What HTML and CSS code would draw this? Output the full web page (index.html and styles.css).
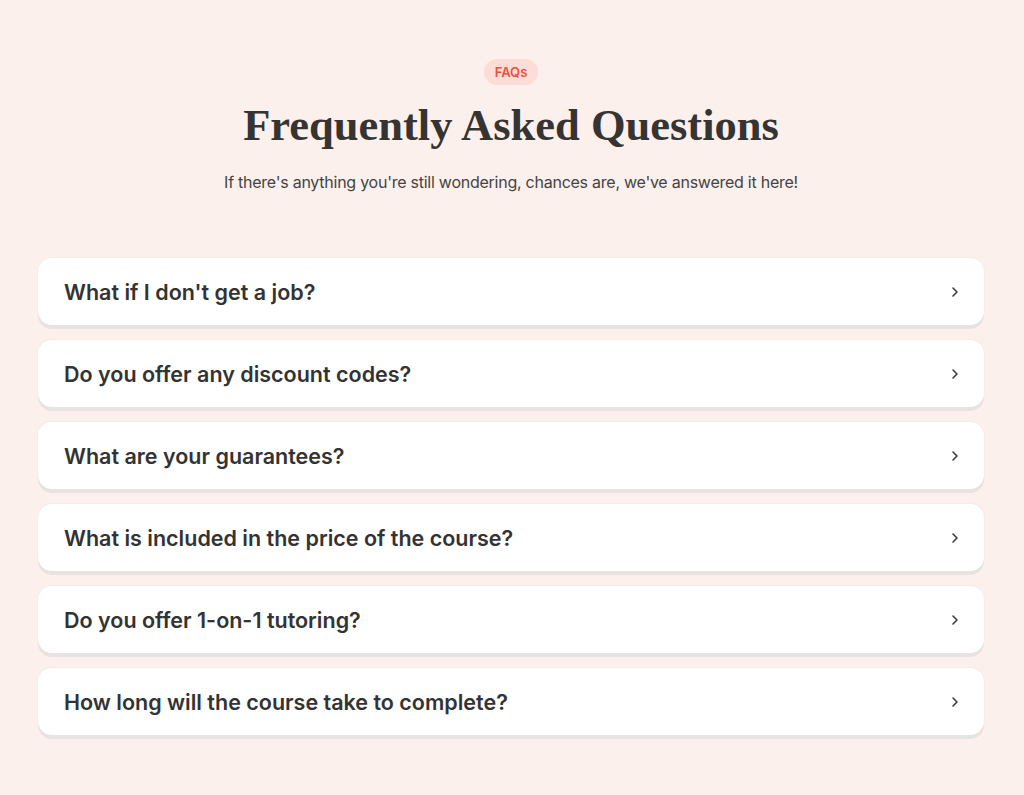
FILE: index.html
```html
<!DOCTYPE html>
<html lang="en">
<head>
<meta charset="utf-8">
<title>FAQs</title>
<link rel="stylesheet" href="styles.css">
</head>
<body>
<main class="faq">
  <header class="faq-head">
    <span class="badge">FAQs</span>
    <h1 class="title">Frequently Asked Questions</h1>
    <p class="subtitle">If there's anything you're still wondering, chances are, we've answered it here!</p>
  </header>
  <ul class="list">
    <li class="item"><span class="q">What if I don't get a job?</span><svg class="chev" width="8" height="12" viewBox="0 0 8 12"><path d="M2 2l4 4-4 4" fill="none" stroke="#3a3a3a" stroke-width="1.6" stroke-linecap="round" stroke-linejoin="round"/></svg></li>
    <li class="item"><span class="q">Do you offer any discount codes?</span><svg class="chev" width="8" height="12" viewBox="0 0 8 12"><path d="M2 2l4 4-4 4" fill="none" stroke="#3a3a3a" stroke-width="1.6" stroke-linecap="round" stroke-linejoin="round"/></svg></li>
    <li class="item"><span class="q">What are your guarantees?</span><svg class="chev" width="8" height="12" viewBox="0 0 8 12"><path d="M2 2l4 4-4 4" fill="none" stroke="#3a3a3a" stroke-width="1.6" stroke-linecap="round" stroke-linejoin="round"/></svg></li>
    <li class="item"><span class="q">What is included in the price of the course?</span><svg class="chev" width="8" height="12" viewBox="0 0 8 12"><path d="M2 2l4 4-4 4" fill="none" stroke="#3a3a3a" stroke-width="1.6" stroke-linecap="round" stroke-linejoin="round"/></svg></li>
    <li class="item"><span class="q">Do you offer 1-on-1 tutoring?</span><svg class="chev" width="8" height="12" viewBox="0 0 8 12"><path d="M2 2l4 4-4 4" fill="none" stroke="#3a3a3a" stroke-width="1.6" stroke-linecap="round" stroke-linejoin="round"/></svg></li>
    <li class="item"><span class="q">How long will the course take to complete?</span><svg class="chev" width="8" height="12" viewBox="0 0 8 12"><path d="M2 2l4 4-4 4" fill="none" stroke="#3a3a3a" stroke-width="1.6" stroke-linecap="round" stroke-linejoin="round"/></svg></li>
  </ul>
</main>
</body>
</html>
```
FILE: styles.css
```css
* { box-sizing: border-box; }
html, body { margin: 0; padding: 0; }
body {
  background: #fcf0ec;
  font-family: Inter, "Noto Sans", sans-serif;
  color: #333;
}
.faq {
  padding: 59px 40px 40px 38px;
}
.faq-head {
  display: flex;
  flex-direction: column;
  align-items: center;
}
.badge {
  display: inline-flex;
  align-items: center;
  justify-content: center;
  width: 54px;
  height: 26px;
  border-radius: 13px;
  background: #fbdcd7;
  color: #e8533f;
  font-size: 13px;
  font-weight: 600;
}
.title {
  margin: 12px 0 0;
  font-family: "Liberation Serif", serif;
  font-weight: 700;
  font-size: 44.5px;
  line-height: 56px;
  color: #353433;
}
.subtitle {
  margin: 17px 0 0;
  font-size: 16px;
  line-height: 24px;
  letter-spacing: -0.25px;
  color: #444;
}
.list {
  list-style: none;
  margin: 64px 0 0;
  padding: 0;
  display: flex;
  flex-direction: column;
  gap: 15px;
}
.item {
  display: flex;
  align-items: center;
  justify-content: space-between;
  height: 67px;
  padding: 0 25px 0 26px;
  background: #fff;
  border-radius: 14px;
  box-shadow: 0 4px 0 #e6e3e2, 0 0 0 1px #f5ebe8;
}
.q {
  font-size: 21.5px;
  font-weight: 600;
  color: #333;
}
.chev { flex: none; }
```
